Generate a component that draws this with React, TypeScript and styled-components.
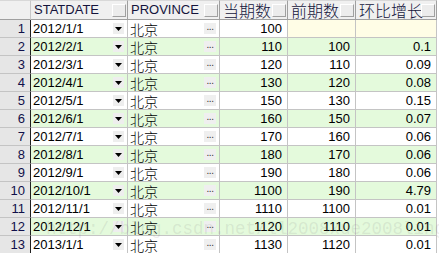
import styled, { createGlobalStyle } from 'styled-components';

const GlobalStyle = createGlobalStyle`
  html, body {
    margin: 0;
    padding: 0;
    background: #ffffff;
    overflow: hidden;
  }
`;

const COLS = '31px 97px 92px 68px 68px 81px 2px';

const rows: [string, string, string, string][] = [
  ['2012/1/1', '100', '', ''],
  ['2012/2/1', '110', '100', '0.1'],
  ['2012/3/1', '120', '110', '0.09'],
  ['2012/4/1', '130', '120', '0.08'],
  ['2012/5/1', '150', '130', '0.15'],
  ['2012/6/1', '160', '150', '0.07'],
  ['2012/7/1', '170', '160', '0.06'],
  ['2012/8/1', '180', '170', '0.06'],
  ['2012/9/1', '190', '180', '0.06'],
  ['2012/10/1', '1100', '190', '4.79'],
  ['2012/11/1', '1110', '1100', '0.01'],
  ['2012/12/1', '1120', '1110', '0.01'],
  ['2013/1/1', '1130', '1120', '0.01'],
];

export default function App() {
  return (
    <>
      <GlobalStyle />
      <Sheet>
        <HeaderRow>
          <Corner />
          <HeaderCell>STATDATE<HeadButton /></HeaderCell>
          <HeaderCell>PROVINCE<HeadButton /></HeaderCell>
          <HeaderCell $cjk>当期数<HeadButton /></HeaderCell>
          <HeaderCell $cjk>前期数<HeadButton /></HeaderCell>
          <HeaderCell $cjk>环比增长<HeadButton /></HeaderCell>
          <Filler />
        </HeaderRow>
        {rows.map(([date, cur, prev, ratio], i) => {
          const even = i % 2 === 1;
          return (
            <Row key={date} $even={even}>
              <RowNum>{i + 1}</RowNum>
              <Cell>
                {date}
                <DropBox>
                  <svg width="7" height="4" viewBox="0 0 7 4">
                    <path d="M0 0h7L3.5 4z" fill="#000" />
                  </svg>
                </DropBox>
              </Cell>
              <Cell $cjk>
                北京
                <DotBox>...</DotBox>
              </Cell>
              <Cell $right>{cur}</Cell>
              <Cell $right $empty={prev === ''}>{prev}</Cell>
              <Cell $right $empty={ratio === ''}>{ratio}</Cell>
              <Filler />
            </Row>
          );
        })}
        <Watermark>http://blog.csdn.net/ll2008xue2008ling</Watermark>
      </Sheet>
    </>
  );
}

const Sheet = styled.div`
  position: relative;
  width: 439px;
  height: 253px;
  overflow: hidden;
  font-family: "Liberation Sans", Arial, "Noto Sans CJK SC", sans-serif;
  color: #000;
`;

const HeaderRow = styled.div`
  display: grid;
  grid-template-columns: ${COLS};
  height: 20px;
  background: #f0f0f0;
`;

const Corner = styled.div`
  border-right: 1px solid #c8c8c8;
  border-bottom: 1px solid #a0a0a0;
  border-top: 1px solid #d8d8d8;
  background: #f0f0f0;
`;

const HeaderCell = styled.div<{ $cjk?: boolean }>`
  position: relative;
  display: flex;
  align-items: center;
  padding-left: 3px;
  border-right: 1px solid #a0a0a0;
  border-bottom: 1px solid #a0a0a0;
  border-top: 1px solid #d8d8d8;
  font-size: ${(p) => (p.$cjk ? '16px' : '13px')};
  font-family: ${(p) =>
    p.$cjk ? '"Noto Sans CJK SC", sans-serif' : '"Liberation Sans", Arial, sans-serif'};
  font-weight: ${(p) => (p.$cjk ? 300 : 400)};
  color: #14143c;
  white-space: nowrap;
  line-height: 18px;
`;

const HeadButton = styled.span`
  position: absolute;
  right: 1px;
  bottom: 2px;
  width: 12px;
  height: 11px;
  background: #ececec;
  border-top: 1px solid #ffffff;
  border-left: 1px solid #ffffff;
  border-right: 1px solid #a0a0a0;
  border-bottom: 1px solid #a0a0a0;
`;

const Filler = styled.div`
  background: #ffffff;
`;

const Row = styled.div<{ $even: boolean }>`
  display: grid;
  grid-template-columns: ${COLS};
  height: 18px;
  background: ${(p) => (p.$even ? '#e4fadc' : '#ffffff')};
`;

const RowNum = styled.div`
  background: #e6e6e6;
  border-right: 1px solid #202020;
  border-bottom: 1px solid #c4c4c4;
  text-align: right;
  padding-right: 5px;
  font-size: 13px;
  line-height: 17px;
  color: #10104a;
`;

const Cell = styled.div<{ $right?: boolean; $cjk?: boolean; $empty?: boolean }>`
  position: relative;
  display: flex;
  align-items: center;
  justify-content: ${(p) => (p.$right ? 'flex-end' : 'flex-start')};
  padding: ${(p) => (p.$right ? '0 5px 0 0' : '0 0 0 2px')};
  border-right: 1px solid #c4c4c4;
  border-bottom: 1px solid #c4c4c4;
  background: ${(p) => (p.$empty ? '#fffde6' : 'transparent')};
  font-size: ${(p) => (p.$cjk ? '14px' : '13px')};
  font-family: ${(p) =>
    p.$cjk ? '"Noto Sans CJK SC", sans-serif' : '"Liberation Sans", Arial, sans-serif'};
  font-weight: ${(p) => (p.$cjk ? 300 : 400)};
  line-height: 1;
  white-space: nowrap;
`;

const DropBox = styled.span`
  position: absolute;
  right: 3px;
  top: 3px;
  width: 11px;
  height: 11px;
  background: #eeeeee;
  display: flex;
  align-items: center;
  justify-content: center;
`;

const DotBox = styled.span`
  position: absolute;
  right: 3px;
  top: 3px;
  width: 12px;
  height: 11px;
  background: #efefef;
  font-family: "Liberation Sans", Arial, sans-serif;
  font-weight: 400;
  font-size: 10px;
  line-height: 8px;
  text-align: center;
  color: #333;
  letter-spacing: -0.5px;
`;

const Watermark = styled.div`
  position: absolute;
  left: 46px;
  top: 219px;
  font-family: "Liberation Mono", "Courier New", monospace;
  font-size: 17.5px;
  color: rgba(120, 120, 120, 0.14);
  white-space: nowrap;
  pointer-events: none;
`;
